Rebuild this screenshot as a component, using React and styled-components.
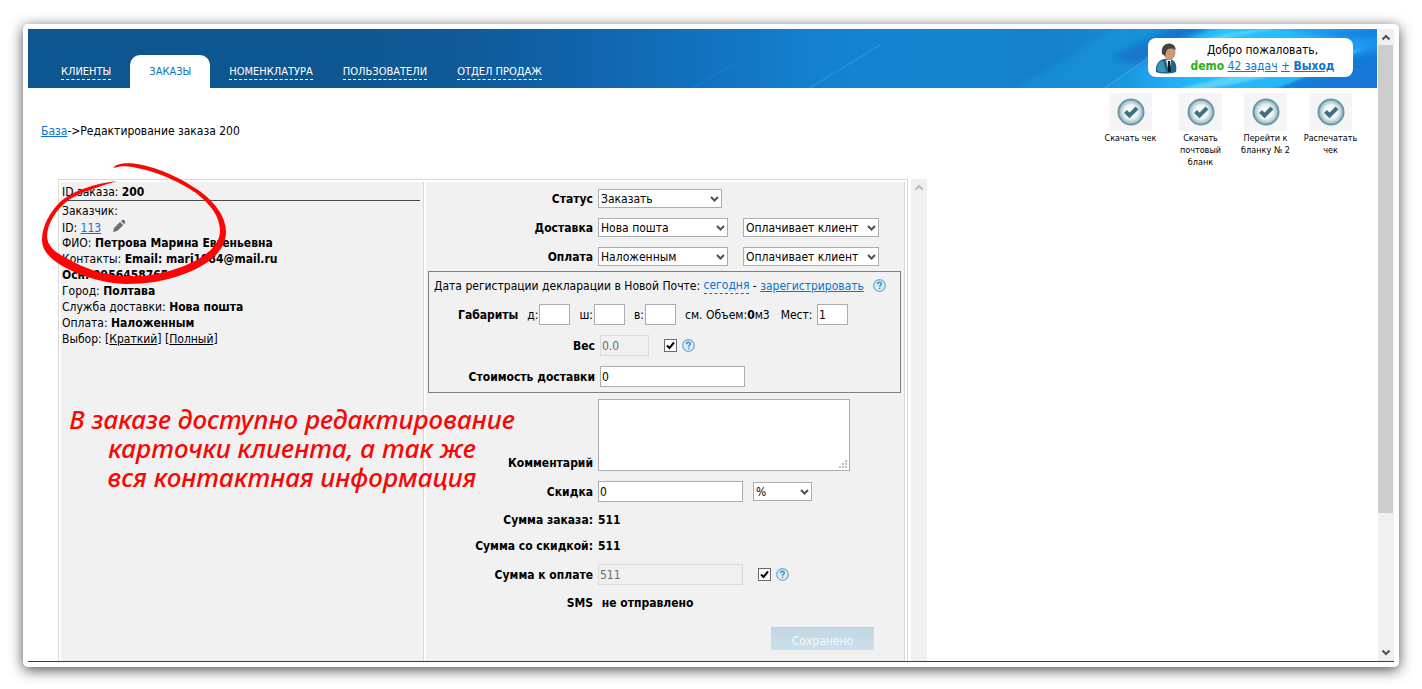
import React from "react";
import styled, { createGlobalStyle } from "styled-components";

const GlobalStyle = createGlobalStyle`
  *, *::before, *::after { box-sizing: border-box; }
  body {
    margin: 0;
    background: #fff;
    color: #000;
    font: 12px/16px "DejaVu Sans Condensed", "DejaVu Sans", sans-serif;
  }
  input, select, textarea, button { font: inherit; color: inherit; margin: 0; }
  a { color: #0b74d1; }
`;

/* ---------- window frame ---------- */

const Stage = styled.div`
  padding: 24px 23px 22px;
`;

const Frame = styled.div`
  padding: 5px;
  border-radius: 5px;
  background: #fff;
  box-shadow: 0 3px 14px rgba(0, 0, 0, 0.7);
`;

const Screen = styled.div`
  display: flex;
  gap: 1px;
  border-bottom: 1px solid #323c50;
`;

const Main = styled.div`
  flex: 1;
  min-width: 0;
`;

const ScrollTrack = styled.div`
  flex: none;
  width: 16px;
  display: flex;
  flex-direction: column;
  align-items: center;
  background: #f0f0f0;
`;

const ScrollThumb = styled.div`
  align-self: stretch;
  margin-right: 1px;
  height: 74%;
  background: #cdcdcd;
`;

const ScrollArrow = styled.svg`
  flex: none;
  width: 16px;
  height: 16px;
  fill: none;
  stroke: ${(p) => p.$tone || "#505050"};
  stroke-width: 2;
  ${(p) => p.$end && "margin-top: auto;"}
  ${(p) => p.$flip && "transform: rotate(180deg);"}
`;

/* ---------- header ---------- */

const Header = styled.header`
  position: relative;
  display: flex;
  justify-content: space-between;
  height: 59px;
  background: #0e568f;
`;

const HeaderArt = styled.svg`
  position: absolute;
  inset: 0 0 0 auto;
  width: 1057px;
  max-width: 100%;
  height: 59px;
`;

const Nav = styled.nav`
  position: relative;
  display: flex;
  align-items: flex-end;
  padding-left: 18px;
`;

const NavItem = styled.a`
  height: 33px;
  margin-right: ${(p) => (p.$active ? 4 : 0)}px;
  margin-left: ${(p) => (p.$active ? 4 : 0)}px;
  padding: 9px ${(p) => (p.$active ? 19 : 15)}px 0;
  border-radius: 10px 10px 0 0;
  background: ${(p) => (p.$active ? "#fff" : "transparent")};
  color: ${(p) => (p.$active ? "#0c72b8" : "#fff")};
  font-size: 11px;
  line-height: 15px;
  text-decoration: none;
  white-space: nowrap;

  span {
    display: block;
    border-bottom: 1px dashed ${(p) => (p.$active ? "transparent" : "#fff")};
  }
`;

const UserCard = styled.div`
  position: relative;
  display: flex;
  align-items: center;
  width: 205px;
  height: 39px;
  margin: 9px 24px 0 0;
  padding-left: 6px;
  border-radius: 8px;
  background: #fff;
`;

const Avatar = styled.svg`
  flex: none;
  width: 24px;
  height: 32px;
`;

const Welcome = styled.div`
  flex: 1;
  padding-right: 6px;
  text-align: center;
  white-space: nowrap;
`;

const UserName = styled.b`
  color: #2db01c;
`;

/* ---------- sub header ---------- */

const SubHeader = styled.div`
  display: flex;
  justify-content: space-between;
  height: 91px;
  padding: 5px 14px 0 13px;
`;

const Crumbs = styled.div`
  padding-top: 30px;
`;

const Actions = styled.div`
  display: grid;
  grid-template-columns: 75px repeat(3, 65px);
`;

const Action = styled.button`
  display: flex;
  flex-direction: column;
  align-items: center;
  padding: 0;
  border: 0;
  background: none;
  font-size: 9px;
  line-height: 12px;
  cursor: pointer;

  svg {
    width: 43px;
    height: 38px;
    margin-bottom: 1px;
    background: #f5f5f5;
  }
  span {
    max-width: 60px;
  }
`;

/* ---------- order panel ---------- */

const Workspace = styled.div`
  position: relative;
  display: flex;
  padding-left: 30px;
`;

const Panel = styled.div`
  flex: 0 1 850px;
  display: grid;
  grid-template-columns: 363px 1fr;
  gap: 2px;
  padding: 2px 2px 0;
  border: 1px solid #d8d8d8;
  border-bottom: 0;
`;

const Cell = styled.section`
  min-width: 0;
  border-right: 1px solid #d8d8d8;
  background: #f1f1f1;
`;

const InnerScroll = styled.div`
  flex: none;
  width: 16px;
  margin-left: 3px;
  background: #f0f0f0;
`;

const OrderInfo = styled.div`
  padding: 2px 3px 0 1px;
`;

const OrderTitle = styled.div`
  height: 17px;
  margin-bottom: 2px;
  border-bottom: 1px solid #4a4a4a;
`;

const Line = styled.div`
  height: 16px;
  white-space: nowrap;
`;

const PencilIcon = styled.svg`
  width: 14px;
  height: 14px;
  margin-left: 7px;
  vertical-align: -1px;
  fill: #6d6d6d;
`;

const PlainLink = styled.a`
  color: #000;
`;

/* ---------- form ---------- */

const Form = styled.form`
  padding-top: 2px;
`;

const Field = styled.div`
  display: flex;
  align-items: ${(p) => (p.$end ? "flex-end" : "center")};
  height: ${(p) => p.$h || 29}px;
  ${(p) => p.$end && "padding-bottom: 6px;"}
`;

const Label = styled.label`
  flex: none;
  width: ${(p) => p.$w || 167}px;
  margin-right: 5px;
  font-weight: 700;
  text-align: right;
`;

const SelectBox = styled.span`
  position: relative;
  flex: none;
  width: ${(p) => p.$w}px;
  height: 19px;
  margin-right: 15px;

  svg {
    position: absolute;
    top: 6px;
    right: 3px;
    width: 9px;
    height: 8px;
    fill: none;
    stroke: #505050;
    stroke-width: 2;
    pointer-events: none;
  }
`;

const Select = styled.select`
  display: block;
  width: 100%;
  height: 19px;
  padding: 1px 2px 0;
  border: 1px solid #abadb3;
  border-radius: 0;
  background: #fff;
  appearance: none;
`;

const TextInput = styled.input`
  flex: none;
  width: ${(p) => p.$w || 145}px;
  height: 21px;
  margin-right: ${(p) => p.$gap || 0}px;
  padding: 1px 1px 0;
  border: 1px solid #abadb3;
  background: #fff;

  &:disabled {
    border-color: #d9d9d9;
    background: #f0f0f0;
    color: #6d6d6d;
  }
`;

const CommentBox = styled.span`
  position: relative;
  display: flex;

  svg {
    position: absolute;
    right: 3px;
    bottom: 3px;
    width: 8px;
    height: 8px;
    fill: #bdbdbd;
    pointer-events: none;
  }
`;

const Comment = styled.textarea`
  width: 252px;
  height: 72px;
  padding: 2px;
  border: 1px solid #abadb3;
  background: #fff;
  resize: none;
`;

const Check = styled.input`
  flex: none;
  width: 13px;
  height: 13px;
  border: 1px solid #6b6b6b;
  background: #fff;
  appearance: none;
`;

const CheckBox = styled.span`
  position: relative;
  display: flex;
  margin-left: 15px;
  margin-right: 5px;

  svg {
    position: absolute;
    inset: 0;
    width: 13px;
    height: 13px;
    fill: none;
    stroke: #000;
    stroke-width: 2;
    pointer-events: none;
  }
`;

const HelpIcon = styled.svg`
  flex: none;
  width: 13px;
  height: 13px;
  margin-left: ${(p) => p.$gap || 0}px;
`;

const Group = styled.fieldset`
  min-width: 0;
  margin: 0 3px 0 2px;
  padding: 0;
  border: 1px solid #7f7f7f;
`;

const GroupLine = styled.div`
  display: flex;
  align-items: center;
  height: ${(p) => p.$h || 31}px;
  padding-left: ${(p) => p.$pad || 0}px;
  white-space: pre;
`;

const DashedLink = styled.a`
  height: 17px;
  border-bottom: 1px dashed #0b74d1;
  text-decoration: none;
`;

const Dim = styled.label`
  margin-left: ${(p) => p.$gap || 9}px;
  margin-right: 1px;
`;

const SaveRow = styled.div`
  display: flex;
  align-items: center;
  justify-content: flex-end;
  height: 45px;
  padding-right: 30px;
`;

const SaveButton = styled.button`
  width: 103px;
  height: 23px;
  padding: 4px 0 0;
  border: 0;
  border-top: 1px solid #bdd3e0;
  background: linear-gradient(#c3d7e3, #c9e0ec);
  color: #f4f8fa;
`;

/* ---------- hand-drawn annotation ---------- */

const Circle = styled.svg`
  position: absolute;
  top: -19px;
  left: 10px;
  width: 192px;
  height: 128px;
  fill: #fb0505;
  pointer-events: none;
`;

const Note = styled.p`
  position: absolute;
  top: 226px;
  left: 34px;
  width: 460px;
  margin: 0;
  color: #fb0505;
  font: italic 500 26px/29px "Noto Sans", sans-serif;
  text-align: center;
  white-space: pre;
  pointer-events: none;
`;

/* ---------- parts ---------- */

function Chevron() {
  return (
    <svg viewBox="0 0 9 8" aria-hidden="true">
      <path d="M1 2 L4.500 5.500 L8 2" />
    </svg>
  );
}

function Dropdown({ id, label, width, value }) {
  return (
    <SelectBox $w={width}>
      <Select id={id} aria-label={label} defaultValue={value}>
        <option>{value}</option>
      </Select>
      <Chevron />
    </SelectBox>
  );
}

function Help({ gap }) {
  return (
    <HelpIcon $gap={gap} viewBox="0 0 13 13" role="img" aria-label="Справка">
      <circle cx="6.500" cy="6.500" r="5.800" fill="#d7eefa" stroke="#74adc4" strokeWidth="1.300" />
      <path
        d="M4.600 5.200 C4.600 2.600 8.500 2.800 8.300 5 C8.200 6.300 6.600 6.300 6.600 7.800 M6.600 8.800 V10"
        fill="none"
        stroke="#3c86b8"
        strokeWidth="1.400"
      />
    </HelpIcon>
  );
}

function Tick({ label }) {
  return (
    <CheckBox>
      <Check type="checkbox" defaultChecked aria-label={label} />
      <svg viewBox="0 0 13 13" aria-hidden="true">
        <path d="M3 6.500 L5.500 9 L10 3.500" />
      </svg>
    </CheckBox>
  );
}

function ActionButton({ children }) {
  return (
    <Action type="button">
      <svg viewBox="0 0 43 38" aria-hidden="true">
        <defs>
          <radialGradient id="disc">
            <stop offset="0" stopColor="#fff" />
            <stop offset="0.550" stopColor="#edf3f5" />
            <stop offset="1" stopColor="#8fb3bf" />
          </radialGradient>
        </defs>
        <circle cx="22" cy="19" r="12.500" fill="url(#disc)" stroke="#6c98a7" strokeWidth="2" />
        <path d="M16.500 18.500 L20.500 22.500 L28 15" fill="none" stroke="#42707f" strokeWidth="4" />
      </svg>
      <span>{children}</span>
    </Action>
  );
}

function HeaderBackdrop() {
  return (
    <HeaderArt viewBox="0 0 1057 59" preserveAspectRatio="xMaxYMid slice" aria-hidden="true">
      <defs>
        <linearGradient id="sky" gradientUnits="userSpaceOnUse" x1="0" y1="0" x2="1057" y2="0">
          <stop offset="0" stopColor="#0e568f" />
          <stop offset="0.140" stopColor="#0f5a9a" />
          <stop offset="0.260" stopColor="#1065ae" />
          <stop offset="0.380" stopColor="#1274c2" />
          <stop offset="0.480" stopColor="#1482d0" />
          <stop offset="0.620" stopColor="#1585cf" />
          <stop offset="0.680" stopColor="#1580cc" />
          <stop offset="0.760" stopColor="#1888d2" />
          <stop offset="0.860" stopColor="#1688dc" />
          <stop offset="1" stopColor="#1478d8" />
        </linearGradient>
        <linearGradient id="glow" gradientUnits="userSpaceOnUse" x1="780" y1="0" x2="1057" y2="0">
          <stop offset="0" stopColor="#1e9ae6" stopOpacity="0.400" />
          <stop offset="0.250" stopColor="#21aef4" />
          <stop offset="0.450" stopColor="#26c4ff" />
          <stop offset="0.750" stopColor="#27b8fc" />
          <stop offset="1" stopColor="#1b90ea" />
        </linearGradient>
        <filter id="soft" x="-10%" y="-40%" width="120%" height="180%">
          <feGaussianBlur stdDeviation="3" />
        </filter>
        <filter id="fine" x="-10%" y="-40%" width="120%" height="180%">
          <feGaussianBlur stdDeviation="1" />
        </filter>
      </defs>
      <rect width="1057" height="59" fill="url(#sky)" />
      <g filter="url(#soft)">
        <path d="M690 62 C730 40 770 15 800 -4 H870 C830 20 800 40 780 62 Z" fill="#1b98de" opacity="0.500" />
        <path d="M790 30 C820 12 840 4 860 -4 H900 C870 8 850 20 830 36 Z" fill="#1276cc" />
        <path d="M775 64 C815 36 860 10 905 -6 H1064 V20 C1010 30 950 50 910 64 Z" fill="url(#glow)" />
        <path d="M965 64 C1000 52 1030 38 1064 26 V64 Z" fill="#1277d6" />
        <path d="M960 -3 C1000 3 1030 2 1062 -3 V8 C1030 12 990 6 960 -3 Z" fill="#1682e2" />
      </g>
      <g filter="url(#fine)">
        <path d="M858 60 C900 49 980 32 1042 20 C1010 34 975 48 945 60 Z" fill="#5fd2fc" opacity="0.900" />
        <path d="M885 60 C930 52 985 40 1025 30 C1000 42 975 52 955 60 Z" fill="#28b8f6" />
        <path d="M884 10 C910 3 940 0 960 -1 L900 10 Z" fill="#6cd4ff" opacity="0.700" />
      </g>
      <path d="M372 59 L430 26" stroke="#2a8ad4" strokeOpacity="0.500" />
      <path d="M490 59 L560 16" stroke="#1e98e4" strokeOpacity="0.800" strokeWidth="1.500" />
      <path d="M785 59 L830 28" stroke="#4cb8f2" strokeOpacity="0.700" />
    </HeaderArt>
  );
}

function UserAvatar() {
  return (
    <Avatar viewBox="0 0 24 32" aria-hidden="true">
      <path d="M2 30 C1 22 5 18 10 17 H17 C22 19 23 24 22 30 C16 32 7 32 2 30 Z" fill="#1f6787" />
      <path d="M3 27 C3 22 6 19 9 19 L12 30 H5 Z" fill="#3f93b4" />
      <path d="M12 18 L17 17 L17 23 L14 26 Z" fill="#dcebf2" />
      <path d="M14 19 L16 19 L17 30 L14 30 Z" fill="#0c1c28" />
      <ellipse cx="15.500" cy="10.500" rx="6" ry="7.500" fill="#c99a74" />
      <path d="M8 12 C7 5 10 2 15 1.500 C20 2 22 5 21.500 8 C18 6 14 6 12.500 9 L11 14 Z" fill="#45423f" />
    </Avatar>
  );
}

const NAV = ["Клиенты", "Заказы", "Номенклатура", "Пользователи", "Отдел продаж"];
const ACTIONS = ["Скачать чек", "Скачать почтовый бланк", "Перейти к бланку № 2", "Распечатать чек"];

export default function App() {
  return (
    <Stage>
      <GlobalStyle />
      <Frame>
        <Screen>
          <Main>
            <Header>
              <HeaderBackdrop />
              <Nav>
                {NAV.map((name) => (
                  <NavItem key={name} href="#" $active={name === "Заказы"}>
                    <span>{name.toUpperCase()}</span>
                  </NavItem>
                ))}
              </Nav>
              <UserCard>
                <UserAvatar />
                <Welcome>
                  Добро пожаловать,
                  <br />
                  <UserName>demo</UserName> <a href="#">42 задач</a> <a href="#">+</a>{" "}
                  <a href="#"><b>Выход</b></a>
                </Welcome>
              </UserCard>
            </Header>

            <SubHeader>
              <Crumbs>
                <a href="#">База</a>-&gt;Редактирование заказа 200
              </Crumbs>
              <Actions>
                {ACTIONS.map((name) => (
                  <ActionButton key={name}>{name}</ActionButton>
                ))}
              </Actions>
            </SubHeader>

            <Workspace>
              <Panel>
                <Cell>
                  <OrderInfo>
                    <OrderTitle>ID заказа: <b>200</b></OrderTitle>
                    <Line>Заказчик:</Line>
                    <Line>
                      ID: <a href="#">113</a>{" "}
                      <PencilIcon viewBox="0 0 14 14" role="img" aria-label="Редактировать">
                        <path d="M1 13 L2 9 L8 3 L11.300 6.200 L5 12 Z M9 2 L10.600 0.800 Q11.200 0.400 11.800 1 L13.200 2.400 Q13.700 3 13.200 3.600 L12.200 5.200 Z" />
                      </PencilIcon>
                    </Line>
                    <Line>ФИО: <b>Петрова Марина Евгеньевна</b></Line>
                    <Line>Контакты: <b>Email: mari1984@mail.ru</b></Line>
                    <Line><b>Осн: 0956458765</b></Line>
                    <Line>Город: <b>Полтава</b></Line>
                    <Line>Служба доставки: <b>Нова пошта</b></Line>
                    <Line>Оплата: <b>Наложенным</b></Line>
                    <Line>
                      Выбор: [<PlainLink href="#">Краткий</PlainLink>] [<PlainLink href="#">Полный</PlainLink>]
                    </Line>
                  </OrderInfo>
                </Cell>

                <Cell>
                  <Form onSubmit={(e) => e.preventDefault()}>
                    <Field>
                      <Label htmlFor="status">Статус</Label>
                      <Dropdown id="status" width={124} value="Заказать" />
                    </Field>
                    <Field>
                      <Label htmlFor="delivery">Доставка</Label>
                      <Dropdown id="delivery" width={130} value="Нова пошта" />
                      <Dropdown label="Кто оплачивает доставку" width={136} value="Оплачивает клиент" />
                    </Field>
                    <Field>
                      <Label htmlFor="payment">Оплата</Label>
                      <Dropdown id="payment" width={130} value="Наложенным" />
                      <Dropdown label="Кто оплачивает перевод" width={136} value="Оплачивает клиент" />
                    </Field>

                    <Group>
                      <GroupLine $h={27} $pad={5}>
                        Дата регистрации декларации в Новой Почте:{" "}
                        <DashedLink href="#">сегодня</DashedLink> - <a href="#">зарегистрировать</a>
                        <Help gap={9} />
                      </GroupLine>
                      <GroupLine $pad={29}>
                        <b>Габариты</b>
                        <Dim htmlFor="length">д:</Dim>
                        <TextInput id="length" $w={31} />
                        <Dim htmlFor="width">ш:</Dim>
                        <TextInput id="width" $w={31} />
                        <Dim htmlFor="height">в:</Dim>
                        <TextInput id="height" $w={31} $gap={9} />
                        см. Объем:<b>0</b>м3
                        <Dim htmlFor="places" $gap={11}>Мест: </Dim>
                        <TextInput id="places" $w={31} defaultValue="1" />
                      </GroupLine>
                      <GroupLine>
                        <Label htmlFor="weight" $w={166}>Вес</Label>
                        <TextInput id="weight" $w={49} defaultValue="0.0" disabled />
                        <Tick label="Рассчитывать вес автоматически" />
                        <Help />
                      </GroupLine>
                      <GroupLine>
                        <Label htmlFor="cost" $w={166}>Стоимость доставки</Label>
                        <TextInput id="cost" defaultValue="0" />
                      </GroupLine>
                    </Group>

                    <Field $h={84} $end>
                      <Label htmlFor="comment">Комментарий</Label>
                      <CommentBox>
                        <Comment id="comment" />
                        <svg viewBox="0 0 8 8" aria-hidden="true">
                          <path d="M6 0h2v2h-2z M3 3h2v2h-2z M6 3h2v2h-2z M0 6h2v2h-2z M3 6h2v2h-2z M6 6h2v2h-2z" />
                        </svg>
                      </CommentBox>
                    </Field>
                    <Field $h={29}>
                      <Label htmlFor="discount">Скидка</Label>
                      <TextInput id="discount" defaultValue="0" $gap={10} />
                      <Dropdown label="Единица скидки" width={59} value="%" />
                    </Field>
                    <Field $h={27}>
                      <Label as="b">Сумма заказа:</Label>
                      <b>511</b>
                    </Field>
                    <Field $h={26}>
                      <Label as="b">Сумма со скидкой:</Label>
                      <b>511</b>
                    </Field>
                    <Field $h={31}>
                      <Label htmlFor="total">Сумма к оплате</Label>
                      <TextInput id="total" defaultValue="511" disabled />
                      <Tick label="Рассчитывать сумму автоматически" />
                      <Help />
                    </Field>
                    <Field $h={26}>
                      <Label as="b">SMS</Label>
                      <b>&nbsp;не отправлено</b>
                    </Field>
                    <SaveRow>
                      <SaveButton type="submit">Сохранено</SaveButton>
                    </SaveRow>
                  </Form>
                </Cell>
              </Panel>
              <InnerScroll>
                <ScrollArrow viewBox="0 0 16 16" $tone="#bababa" aria-hidden="true">
                  <path d="M4.500 10.500 L8 7 L11.500 10.500" />
                </ScrollArrow>
              </InnerScroll>

              <Circle viewBox="38 160 192 128" aria-hidden="true">
                <path d="M114 167 C118 163 128 162.500 140 164.500 C160 168 182 179 198 190 C214 201 226 216 226 232 C226 252 206 266 184 274 C166 281 146 284 126 284 C104 283 84 277 70 270 C52 261 42 252 42 240 C42 226 50 212 60 202 C74 190 94 184 117 181 C98 187 82 192 70 199 C56 209 47 224 47 237 C48 246 54 252 68 259 C84 268 104 276 128 276 C148 277 166 273 184 266 C204 258 220 246 220 231 C220 216 210 204 196 193 C180 182 160 173 142 169 C130 166 122 165 114 168 Z" />
              </Circle>
              <Note>{"В заказе доступно редактирование\nкарточки клиента, а так же\nвся контактная информация"}</Note>
            </Workspace>
          </Main>

          <ScrollTrack aria-hidden="true">
            <ScrollArrow viewBox="0 0 16 16">
              <path d="M4.500 10.500 L8 7 L11.500 10.500" />
            </ScrollArrow>
            <ScrollThumb />
            <ScrollArrow viewBox="0 0 16 16" $flip $end>
              <path d="M4.500 10.500 L8 7 L11.500 10.500" />
            </ScrollArrow>
          </ScrollTrack>
        </Screen>
      </Frame>
    </Stage>
  );
}
